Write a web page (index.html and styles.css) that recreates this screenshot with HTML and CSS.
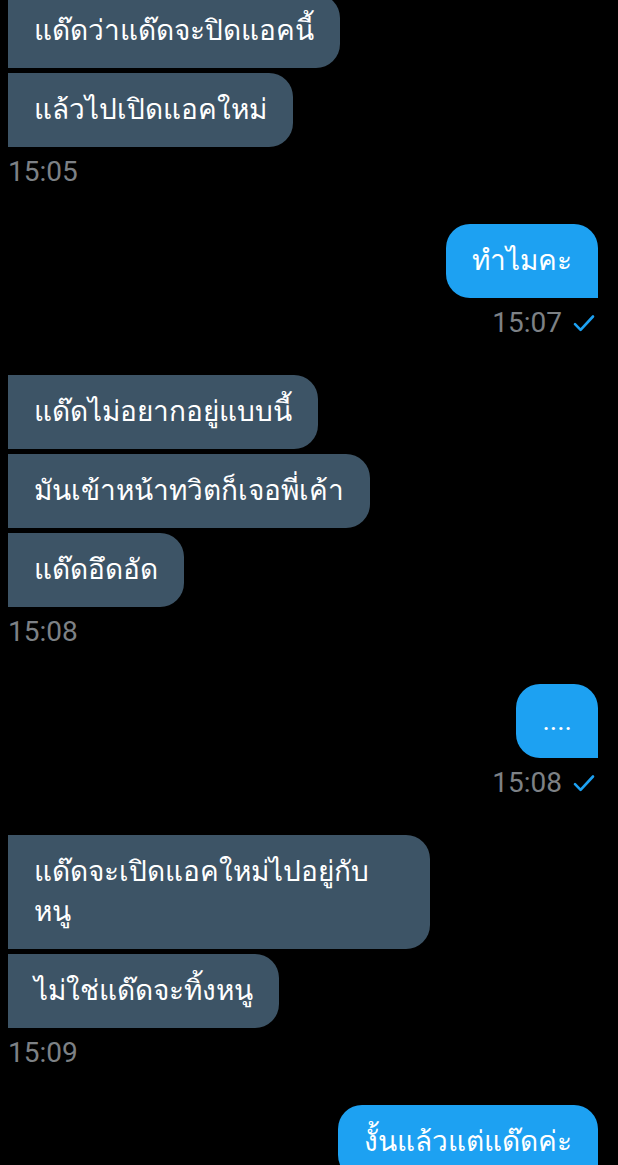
FILE: index.html
```html
<!DOCTYPE html>
<html lang="th">
    <head>
        <meta charset="UTF-8">
        <meta name="viewport" content="width=device-width, initial-scale=1.0">
        <title>Messages</title>
        <link rel="stylesheet" href="styles.css">
    </head>
    <body>
        <main id="chat">
            <section class="group in first">
                <div class="bubble">แด๊ดว่าแด๊ดจะปิดแอคนี้</div>
                <div class="bubble">แล้วไปเปิดแอคใหม่</div>
                <div class="time">15:05</div>
            </section>

            <section class="group out">
                <div class="bubble">ทำไมคะ</div>
                <div class="time">15:07
                    <svg class="tick" viewBox="0 0 24 24" width="24" height="24"><path d="M3 13.2l5.6 5.6L21 5.5"/></svg>
                </div>
            </section>

            <section class="group in">
                <div class="bubble">แด๊ดไม่อยากอยู่แบบนี้</div>
                <div class="bubble">มันเข้าหน้าทวิตก็เจอพี่เค้า</div>
                <div class="bubble">แด๊ดอึดอัด</div>
                <div class="time">15:08</div>
            </section>

            <section class="group out">
                <div class="bubble">....</div>
                <div class="time">15:08
                    <svg class="tick" viewBox="0 0 24 24" width="24" height="24"><path d="M3 13.2l5.6 5.6L21 5.5"/></svg>
                </div>
            </section>

            <section class="group in">
                <div class="bubble">แด๊ดจะเปิดแอคใหม่ไปอยู่กับหนู</div>
                <div class="bubble">ไม่ใช่แด๊ดจะทิ้งหนู</div>
                <div class="time">15:09</div>
            </section>

            <section class="group out">
                <div class="bubble">งั้นแล้วแต่แด๊ดค่ะ</div>
            </section>
        </main>
    </body>
</html>
```

FILE: styles.css
```css
:root{
    --incoming:#3d5466;
    --outgoing:#1da1f2;
    --muted:#7d8185;
    --white:#ffffff;
}
*,*::before,*::after{
    padding: 0;
    margin: 0;
    box-sizing: border-box;
}
html,body{
    background-color: #000;
}
body{
    font-family: Roboto, "Noto Sans", "DejaVu Sans", sans-serif;
    color: var(--white);
    overflow: hidden;
    height: 1165px;
}
#chat{
    display: flex;
    flex-direction: column;
    gap: 36px;
    padding: 0 20px 0 8px;
}
.group{
    display: flex;
    flex-direction: column;
    gap: 5px;
}
.group.first{
    margin-top: -6px;
}
.group.in{
    align-items: flex-start;
}
.group.out{
    align-items: flex-end;
}
.bubble{
    max-width: 422px;
    padding: 17px 26px;
    font-size: 28px;
    line-height: 40px;
    border-radius: 24px;
}
.in .bubble{
    background-color: var(--incoming);
    border-top-left-radius: 0;
    border-bottom-left-radius: 0;
}
.out .bubble{
    background-color: var(--outgoing);
    border-bottom-right-radius: 0;
}
.time{
    display: flex;
    align-items: center;
    gap: 10px;
    margin-top: 4px;
    font-size: 28px;
    line-height: 32px;
    color: var(--muted);
}
.out .time{
    padding-right: 2px;
}
.tick{
    fill: none;
    stroke: var(--outgoing);
    stroke-width: 2.6;
    stroke-linecap: round;
    stroke-linejoin: round;
}
```
